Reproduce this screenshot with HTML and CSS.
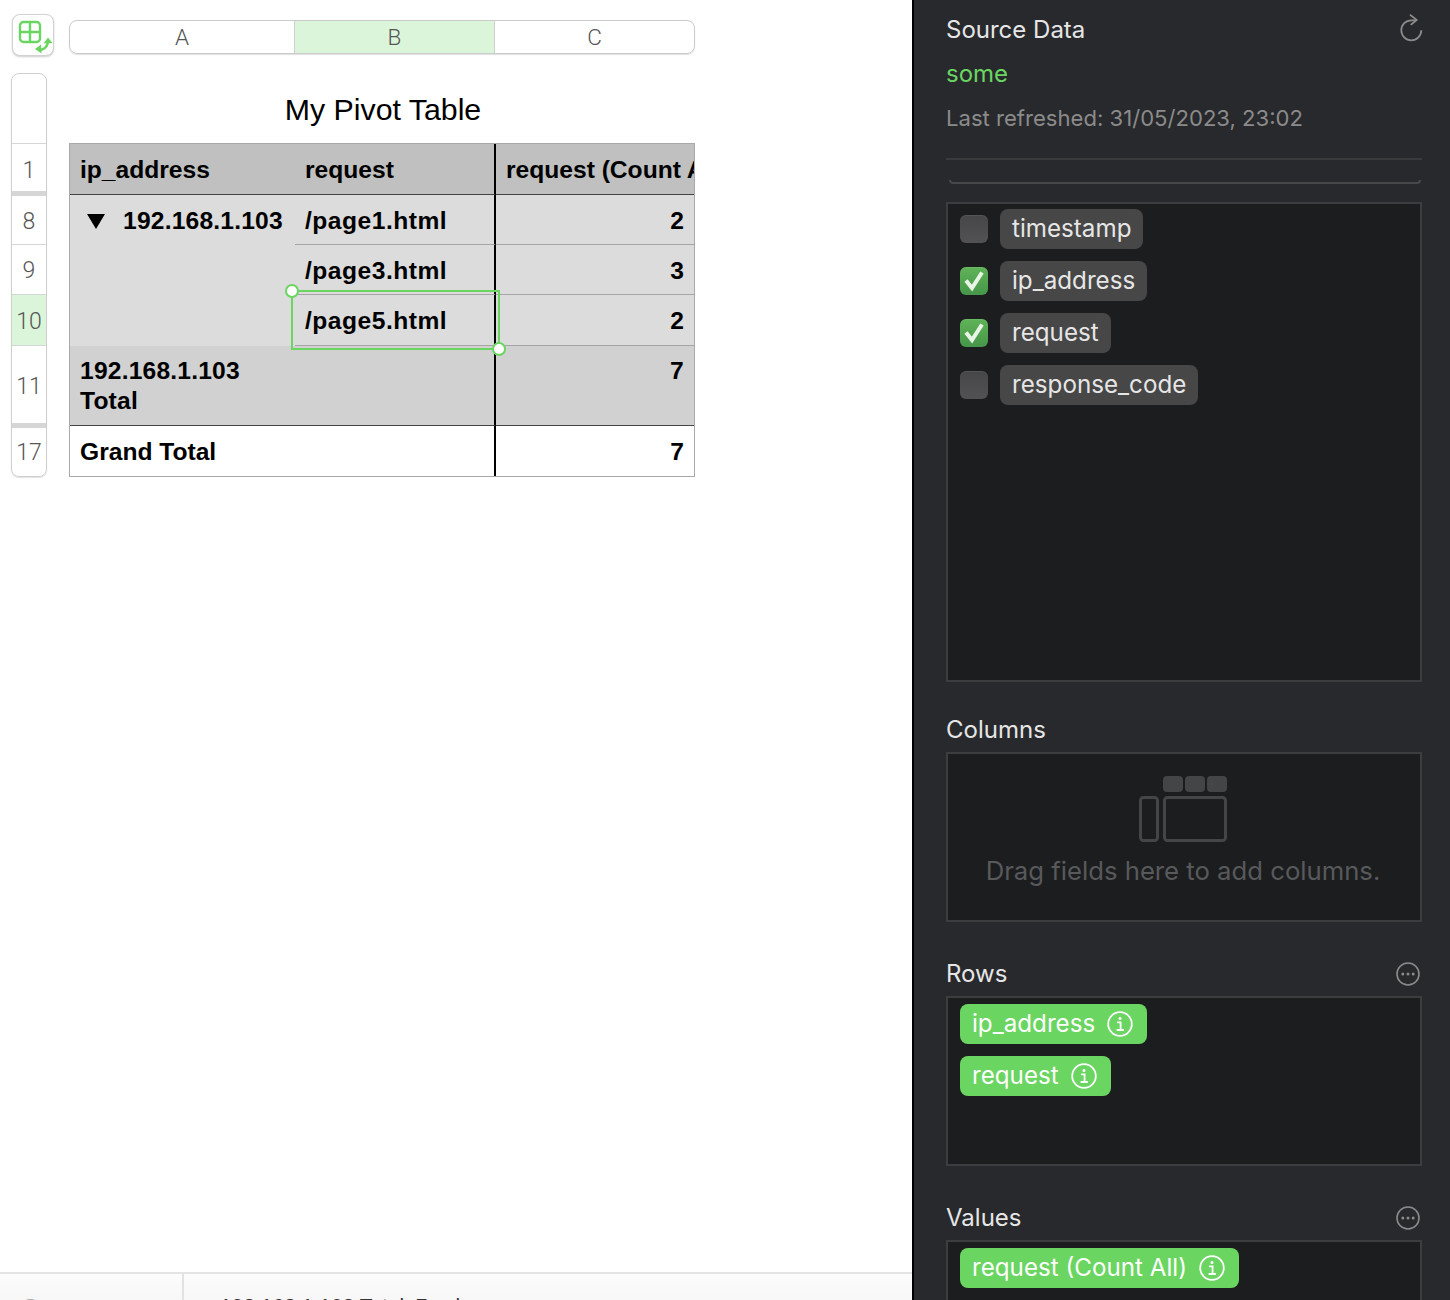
FILE: index.html
```html
<!DOCTYPE html>
<html lang="en">
<head>
    <meta charset="UTF-8">
    <title>My Pivot Table</title>
    <link rel="stylesheet" href="styles.css">
</head>
<body>
    <svg class="icon-defs" width="0" height="0">
        <symbol id="info" viewBox="0 0 26 26">
            <circle cx="13" cy="13" r="11.8" fill="none" stroke="currentColor" stroke-width="1.8"/>
            <circle cx="13" cy="7.6" r="1.5" fill="currentColor"/>
            <path d="M10 11.4h3.6v7.4M9.6 19h7.2" fill="none" stroke="currentColor" stroke-width="1.8"/>
        </symbol>
        <symbol id="more" viewBox="0 0 24 24">
            <circle cx="12" cy="12" r="11" fill="none" stroke="currentColor" stroke-width="1.6"/>
            <circle cx="6.8" cy="12" r="1.5" fill="currentColor"/>
            <circle cx="12" cy="12" r="1.5" fill="currentColor"/>
            <circle cx="17.2" cy="12" r="1.5" fill="currentColor"/>
        </symbol>
        <symbol id="tick" viewBox="0 0 28 28">
            <path d="M6 13.500l6 7.500L22 5.500" fill="none" stroke="currentColor" stroke-width="4"/>
        </symbol>
    </svg>

    <main class="sheet">
        <div class="sheet-top">
            <button class="corner-button">
                <svg width="42" height="42" viewBox="0 0 42 42">
                    <rect x="8" y="8" width="20" height="20" rx="3.5" fill="none" stroke="#6ad561" stroke-width="2.400"/>
                    <path d="M18 8v20M8 18h20" stroke="#6ad561" stroke-width="2.400"/>
                    <path d="M28 36Q35 35 36 28" fill="none" stroke="#6ad561" stroke-width="2.400"/>
                    <path d="M36 23.500L40.500 29L31.500 29.500ZM23 35L29 30.500L29.500 39.500Z" fill="#6ad561"/>
                </svg>
            </button>
            <div class="col-head">
                <div class="col-a">A</div>
                <div class="col-b selected">B</div>
                <div class="col-c">C</div>
            </div>
        </div>

        <div class="sheet-body">
            <div class="row-head">
                <div class="row-cell h-title"></div>
                <div class="row-cell h-1 gap-after">1</div>
                <div class="row-cell h-8">8</div>
                <div class="row-cell h-9">9</div>
                <div class="row-cell h-10 selected">10</div>
                <div class="row-cell h-11 gap-after">11</div>
                <div class="row-cell h-17">17</div>
            </div>

            <div class="pivot">
                <h1 class="pivot-title">My Pivot Table</h1>
                <div class="table-wrap">
                    <table class="pivot-table">
                        <colgroup>
                            <col class="w-a">
                            <col class="w-b">
                            <col class="w-c">
                        </colgroup>
                        <tr class="r-head">
                            <td>ip_address</td>
                            <td class="divide">request</td>
                            <td>request (Count All)</td>
                        </tr>
                        <tr class="r-body r-50">
                            <td rowspan="3" class="group">
                                <span class="disclosure"></span>192.168.1.103
                            </td>
                            <td class="divide line path">/page1.html</td>
                            <td class="num line">2</td>
                        </tr>
                        <tr class="r-body r-50">
                            <td class="divide line path">/page3.html</td>
                            <td class="num line">3</td>
                        </tr>
                        <tr class="r-body r-51">
                            <td class="divide line path">/page5.html</td>
                            <td class="num line">2</td>
                        </tr>
                        <tr class="r-sub">
                            <td>192.168.1.103 Total</td>
                            <td class="divide"></td>
                            <td class="num">7</td>
                        </tr>
                        <tr class="r-grand">
                            <td>Grand Total</td>
                            <td class="divide"></td>
                            <td class="num">7</td>
                        </tr>
                    </table>
                    <div class="selection">
                        <span class="handle handle-start"></span>
                        <span class="handle handle-end"></span>
                    </div>
                </div>
            </div>
        </div>

        <div class="status-bar">
            <div class="status-left">Group</div>
            <div class="status-right">192.168.1.103 Total: 7 values</div>
        </div>
    </main>

    <aside class="panel">
        <div class="panel-head">
            <span class="label">Source Data</span>
            <svg class="refresh" width="24" height="28" viewBox="0 0 24 28">
                <path d="M16 6.300H11.300A10 10 0 1 0 21.300 16.300" fill="none" stroke="#8b8b8b" stroke-width="1.800"/>
                <path d="M10 .7L16.700 5.900L10.700 10.900" fill="none" stroke="#8b8b8b" stroke-width="1.800"/>
            </svg>
        </div>
        <div class="source-name">some</div>
        <div class="refreshed">Last refreshed: 31/05/2023, 23:02</div>
        <div class="divider"></div>
        <div class="search-edge"></div>

        <div class="zone field-list">
            <div class="field">
                <span class="check"></span>
                <span class="pill">timestamp</span>
            </div>
            <div class="field">
                <span class="check on"><svg width="28" height="28"><use href="#tick"/></svg></span>
                <span class="pill">ip_address</span>
            </div>
            <div class="field">
                <span class="check on"><svg width="28" height="28"><use href="#tick"/></svg></span>
                <span class="pill">request</span>
            </div>
            <div class="field">
                <span class="check"></span>
                <span class="pill">response_code</span>
            </div>
        </div>

        <div class="zone-label"><span class="label">Columns</span></div>
        <div class="zone zone-empty">
            <svg width="88" height="66" viewBox="0 0 88 66">
                <rect x="24" y="0" width="20" height="16" rx="4" fill="#444547"/>
                <rect x="46" y="0" width="20" height="16" rx="4" fill="#444547"/>
                <rect x="68" y="0" width="20" height="16" rx="4" fill="#444547"/>
                <rect x="1.500" y="21.500" width="17" height="43" rx="3" fill="none" stroke="#444547" stroke-width="3"/>
                <rect x="25.500" y="21.500" width="61" height="43" rx="3" fill="none" stroke="#444547" stroke-width="3"/>
            </svg>
            <div class="empty-text">Drag fields here to add columns.</div>
        </div>

        <div class="zone-label">
            <span class="label">Rows</span>
            <svg class="more" width="24" height="24"><use href="#more"/></svg>
        </div>
        <div class="zone zone-pills">
            <span class="pill green">ip_address <svg width="26" height="26"><use href="#info"/></svg></span>
            <span class="pill green">request <svg width="26" height="26"><use href="#info"/></svg></span>
        </div>

        <div class="zone-label">
            <span class="label">Values</span>
            <svg class="more" width="24" height="24"><use href="#more"/></svg>
        </div>
        <div class="zone zone-pills">
            <span class="pill green">request (Count All) <svg width="26" height="26"><use href="#info"/></svg></span>
        </div>
    </aside>
</body>
</html>
```

FILE: styles.css
```css
* {
    box-sizing: border-box;
}

html, body {
    height: 100%;
}

body {
    margin: 0;
    display: flex;
    height: 1300px;
    overflow: hidden;
    background-color: #fff;
    font-family: "Liberation Sans", Arial, sans-serif;
    color: #000;
}

.icon-defs {
    position: absolute;
}

/* spreadsheet side */
.sheet {
    width: 912px;
    flex: none;
    display: flex;
    flex-direction: column;
}

.sheet-top {
    display: flex;
    align-items: flex-start;
    padding: 14px 0 0 12px;
    gap: 15px;
}

.corner-button {
    width: 42px;
    height: 42px;
    padding: 0;
    background: #fff;
    border: 1px solid #d2d2d2;
    border-radius: 8px;
    box-shadow: 0 1px 2px rgba(0, 0, 0, 0.2);
}

.corner-button svg {
    display: block;
    margin: -1px;
}

.col-head {
    display: flex;
    width: 626px;
    height: 34px;
    margin-top: 6px;
    border: 1px solid #cacaca;
    border-radius: 8px;
    overflow: hidden;
    box-shadow: 0 1px 1px rgba(0, 0, 0, 0.12);
    font-family: Roboto, "Liberation Sans", sans-serif;
    font-size: 22.5px;
    font-weight: 300;
    line-height: 33px;
    color: #555;
    text-align: center;
}

.col-a {
    width: 225px;
    border-right: 1px solid #d0d0d0;
}

.col-b {
    width: 200px;
    border-right: 1px solid #d0d0d0;
}

.col-c {
    width: 199px;
}

.selected {
    background-color: #dbf5da;
}

.sheet-body {
    display: flex;
    flex: 1;
    gap: 22px;
    margin-top: 17px;
    padding-left: 11px;
}

.row-head {
    width: 36px;
    height: 404px;
    border: 1px solid #cfcfcf;
    border-radius: 8px;
    overflow: hidden;
    box-shadow: 0 1px 1px rgba(0, 0, 0, 0.12);
    font-family: Roboto, "Liberation Sans", sans-serif;
    font-size: 23px;
    font-weight: 300;
    color: #555;
    text-align: center;
}

.row-cell {
    display: flex;
    align-items: center;
    justify-content: center;
    padding-top: 2px;
    border-bottom: 1px solid #d6d6d6;
}

.row-cell:last-child {
    border-bottom: none;
}

.h-title { height: 70px; }
.h-1 { height: 52px; }
.h-8 { height: 49px; }
.h-9 { height: 50px; }
.h-10 { height: 51px; }
.h-11 { height: 82px; }
.h-17 { height: 48px; }

.gap-after {
    padding-top: 6px;
    border-bottom: 5px solid #d6d6d6;
}

.row-cell.h-11 {
    padding-top: 4px;
}

.row-cell.h-17 {
    padding-top: 0;
}

.pivot {
    width: 626px;
}

.pivot-title {
    margin: 0;
    height: 70px;
    padding: 19px 0 0 2px;
    font-size: 30.300px;
    font-weight: normal;
    line-height: 36px;
    text-align: center;
}

.table-wrap {
    position: relative;
    height: 334px;
    border: 1px solid #a9a9a9;
}

.pivot-table {
    width: 624px;
    table-layout: fixed;
    border-collapse: separate;
    border-spacing: 0;
    font-size: 24.6px;
    font-weight: bold;
    line-height: 30px;
}

.w-a { width: 225px; }
.w-b { width: 201px; }
.w-c { width: 198px; }

.pivot-table td {
    padding: 11px 10px 0;
    vertical-align: top;
    overflow: hidden;
    white-space: nowrap;
}

.pivot-table .divide {
    border-right: 2px solid #000;
}

.pivot-table .num {
    text-align: right;
}

.pivot-table .path {
    letter-spacing: 0.5px;
}

.pivot-table .group {
    letter-spacing: 0.2px;
}

.r-head td {
    height: 51px;
    background-color: #bfc0bf;
    border-bottom: 1px solid #444;
}

.r-body td {
    background-color: #dcdcdc;
}

.r-50 td { height: 50px; }
.r-51 td { height: 51px; }

.pivot-table .line {
    border-bottom: 1px solid #a5a5a5;
}

.pivot-table .r-sub td {
    height: 80px;
    padding-top: 10px;
    background-color: #d1d1d1;
    border-bottom: 1px solid #444;
    letter-spacing: 0.2px;
    white-space: normal;
}

.r-grand td {
    height: 50px;
    background-color: #fff;
}

.disclosure {
    display: inline-block;
    width: 0;
    height: 0;
    margin: 0 18px 0 7px;
    border-left: 9px solid transparent;
    border-right: 9px solid transparent;
    border-top: 15px solid #000;
}

.selection {
    position: absolute;
    left: 221px;
    top: 146px;
    width: 209px;
    height: 60px;
    border: 2px solid #6ad561;
}

.handle {
    position: absolute;
    width: 14px;
    height: 14px;
    background: #fff;
    border: 2px solid #6ad561;
    border-radius: 50%;
}

.handle-start {
    left: -8px;
    top: -8px;
}

.handle-end {
    right: -8px;
    bottom: -8px;
}

.status-bar {
    display: flex;
    height: 28px;
    flex: none;
    overflow: hidden;
    border-top: 2px solid #e4e4e4;
    background: linear-gradient(#fcfcfc, #f7f7f7);
    font-size: 21px;
    line-height: 26px;
}

.status-left {
    width: 184px;
    padding: 19px 0 0 22px;
    border-right: 2px solid #e2e2e2;
    color: #aaa;
}

.status-right {
    padding: 19px 0 0 36px;
    color: #333;
}

/* inspector side */
.panel {
    flex: 1;
    height: 1300px;
    overflow: hidden;
    padding: 15px 28px 0 32px;
    border-left: 2px solid #000;
    background-color: #28292c;
    font-family: Inter, "Noto Sans", sans-serif;
    font-size: 24px;
    line-height: 30px;
    color: #e6e6e6;
}

.panel-head {
    display: flex;
    justify-content: space-between;
    align-items: flex-start;
    height: 30px;
}

.refresh {
    margin: -1px -2px 0 0;
}

.source-name {
    margin-top: 14px;
    color: #6ad561;
}

.refreshed {
    margin-top: 14px;
    font-size: 22.100px;
    color: #8b8b8b;
}

.divider {
    height: 2px;
    margin-top: 25px;
    background-color: #3a3b3d;
}

.search-edge {
    height: 4px;
    margin: 20px 1px 0 3px;
    border-bottom: 2px solid #47484a;
    border-left: 2px solid #47484a;
    border-right: 2px solid #47484a;
    border-radius: 0 0 10px 10px;
    border-top: none;
}

.zone {
    border: 2px solid #3c3d3f;
    background-color: #1c1d1f;
}

.field-list {
    height: 480px;
    margin-top: 18px;
    padding: 5px 12px;
    display: flex;
    flex-direction: column;
    gap: 12px;
}

.field {
    display: flex;
    align-items: center;
    gap: 12px;
}

.check {
    width: 28px;
    height: 28px;
    border-radius: 6px;
    background: linear-gradient(#464648, #525254);
    box-shadow: inset 0 1px 0 rgba(255, 255, 255, 0.08);
}

.check.on {
    background: linear-gradient(#5fb357, #46964a);
    color: #e8f5e6;
}

.check svg {
    display: block;
}

.pill {
    display: inline-flex;
    align-items: center;
    gap: 12px;
    height: 40px;
    padding: 0 12px;
    border-radius: 8px;
    background-color: #474747;
    font-size: 24.200px;
}

.pill.green {
    padding-right: 14px;
    background-color: #6ad561;
    color: #fff;
}

.zone-label {
    display: flex;
    justify-content: space-between;
    align-items: center;
    height: 30px;
    padding-top: 2px;
    margin-top: 32px;
    margin-bottom: 8px;
}

.more {
    margin-right: 2px;
    color: #8b8b8b;
}

.zone-empty {
    height: 170px;
    padding: 22px 2px 0 0;
    text-align: center;
}

.zone-empty svg {
    display: block;
    margin: 0 auto;
}

.empty-text {
    margin-top: 14px;
    font-size: 25.700px;
    color: #58595b;
}

.zone-pills {
    height: 170px;
    padding: 6px 12px;
    display: flex;
    flex-direction: column;
    align-items: flex-start;
    gap: 12px;
}

.zone-pills + .zone-label,
.zone-empty + .zone-label {
    margin-top: 36px;
}
```
